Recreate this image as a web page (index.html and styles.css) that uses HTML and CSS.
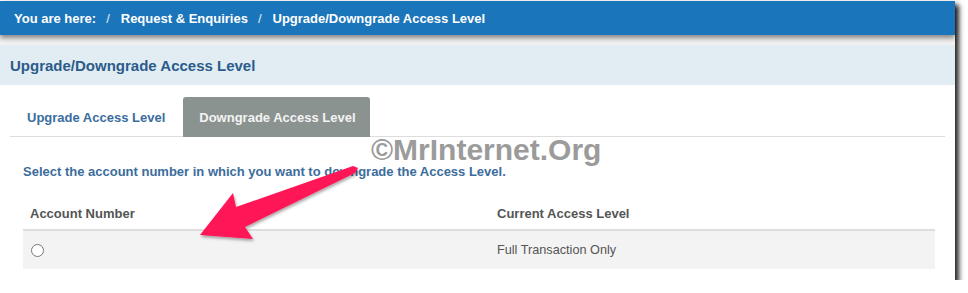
FILE: index.html
```html
<!DOCTYPE html>
<html>
<head>
<meta charset="utf-8">
<link rel="stylesheet" href="styles.css">
</head>
<body>
<div class="frame">
  <div class="crumbs">
    <span>You are here:</span><span class="sep">/</span><span>Request &amp; Enquiries</span><span class="sep">/</span><span>Upgrade/Downgrade Access Level</span>
  </div>
  <div class="gap"></div>
  <div class="heading">Upgrade/Downgrade Access Level</div>
  <div class="panel">
    <div class="tabs">
      <div class="tab">Upgrade Access Level</div>
      <div class="tab active">Downgrade Access Level</div>
    </div>
    <div class="content">
      <p class="hint">Select the account number in which you want to downgrade the Access Level.</p>
      <table class="grid">
        <thead>
          <tr><th class="c1">Account Number</th><th>Current Access Level</th></tr>
        </thead>
        <tbody>
          <tr><td class="c1"><span class="radio"></span></td><td>Full Transaction Only</td></tr>
        </tbody>
      </table>
    </div>
  </div>
  <div class="mark">©MrInternet.Org</div>
  <svg class="arrow" width="968" height="293" viewBox="0 0 968 293">
    <defs>
      <filter id="sh" x="-20%" y="-20%" width="140%" height="140%">
        <feDropShadow dx="1" dy="2" stdDeviation="1.5" flood-color="#000" flood-opacity="0.35"/>
      </filter>
    </defs>
    <polygon filter="url(#sh)" fill="#ff1656" points="200,235 233,193 236,207 353,166 358,168 355,173 245,227 253,239"/>
  </svg>
</div>
</body>
</html>
```

FILE: styles.css
```css
html, body { margin: 0; padding: 0; background: #fff; }
body { padding-top: 1px; font-family: "Liberation Sans", Arial, sans-serif; }

.frame {
  position: relative;
  width: 955px;
  height: 279px;
  background: #fff;
  box-shadow: 4px 4px 5px rgba(0,0,0,0.85);
}

.crumbs {
  position: relative;
  z-index: 1;
  height: 34px;
  background: #1b75bb;
  color: #fff;
  font-size: 13px;
  font-weight: bold;
  display: flex;
  align-items: center;
  padding-left: 14px;
  box-shadow: 0 3px 5px rgba(0,0,0,0.45);
}
.crumbs .sep { margin: 0 11px 0 10px; font-weight: normal; color: #e6eef6; }

.gap { height: 10px; background: #f1f1f1; }

.heading {
  height: 40px;
  background: #e1edf3;
  color: #2b5b8b;
  font-size: 15px;
  font-weight: bold;
  display: flex;
  align-items: center;
  padding-left: 10px;
}

.panel { padding: 12px 10px 0 10px; }

.tabs {
  display: flex;
  border-bottom: 1px solid #dddddd;
  height: 39px;
}
.tab {
  height: 40px;
  display: flex;
  align-items: center;
  padding: 0 18px 0 17px;
  font-size: 13px;
  font-weight: bold;
  color: #3a6d9e;
  box-sizing: border-box;
}
.tab.active {
  background: #8a9390;
  color: #f4f4f4;
  border-radius: 3px 3px 0 0;
  padding: 0 14px 0 16px;
}

.content { padding: 0 10px 0 13px; }

.hint {
  margin: 28px 0 0 0;
  font-size: 13px;
  font-weight: bold;
  color: #3b6c9c;
  line-height: 14px;
}

.grid {
  width: 100%;
  border-collapse: collapse;
  margin-top: 18px;
  font-size: 13px;
}
.grid th {
  text-align: left;
  color: #555;
  font-weight: bold;
  padding: 0 7px;
  height: 32px;
  border-bottom: 2px solid #dddddd;
}
.grid .c1 { width: 467px; box-sizing: border-box; }
.grid td {
  background: #f3f3f3;
  color: #555;
  font-size: 12.7px;
  padding: 0 7px;
  height: 38px;
}
.radio {
  display: block;
  width: 11px;
  height: 11px;
  border: 1px solid #777;
  border-radius: 50%;
  background: #fff;
  margin-left: 1px;
}

.mark {
  position: absolute;
  left: 371px;
  top: 131px;
  font-size: 30px;
  font-weight: bold;
  color: #9b9b9b;
  line-height: 36px;
}

.arrow { position: absolute; left: 0; top: -1px; pointer-events: none; }
```
